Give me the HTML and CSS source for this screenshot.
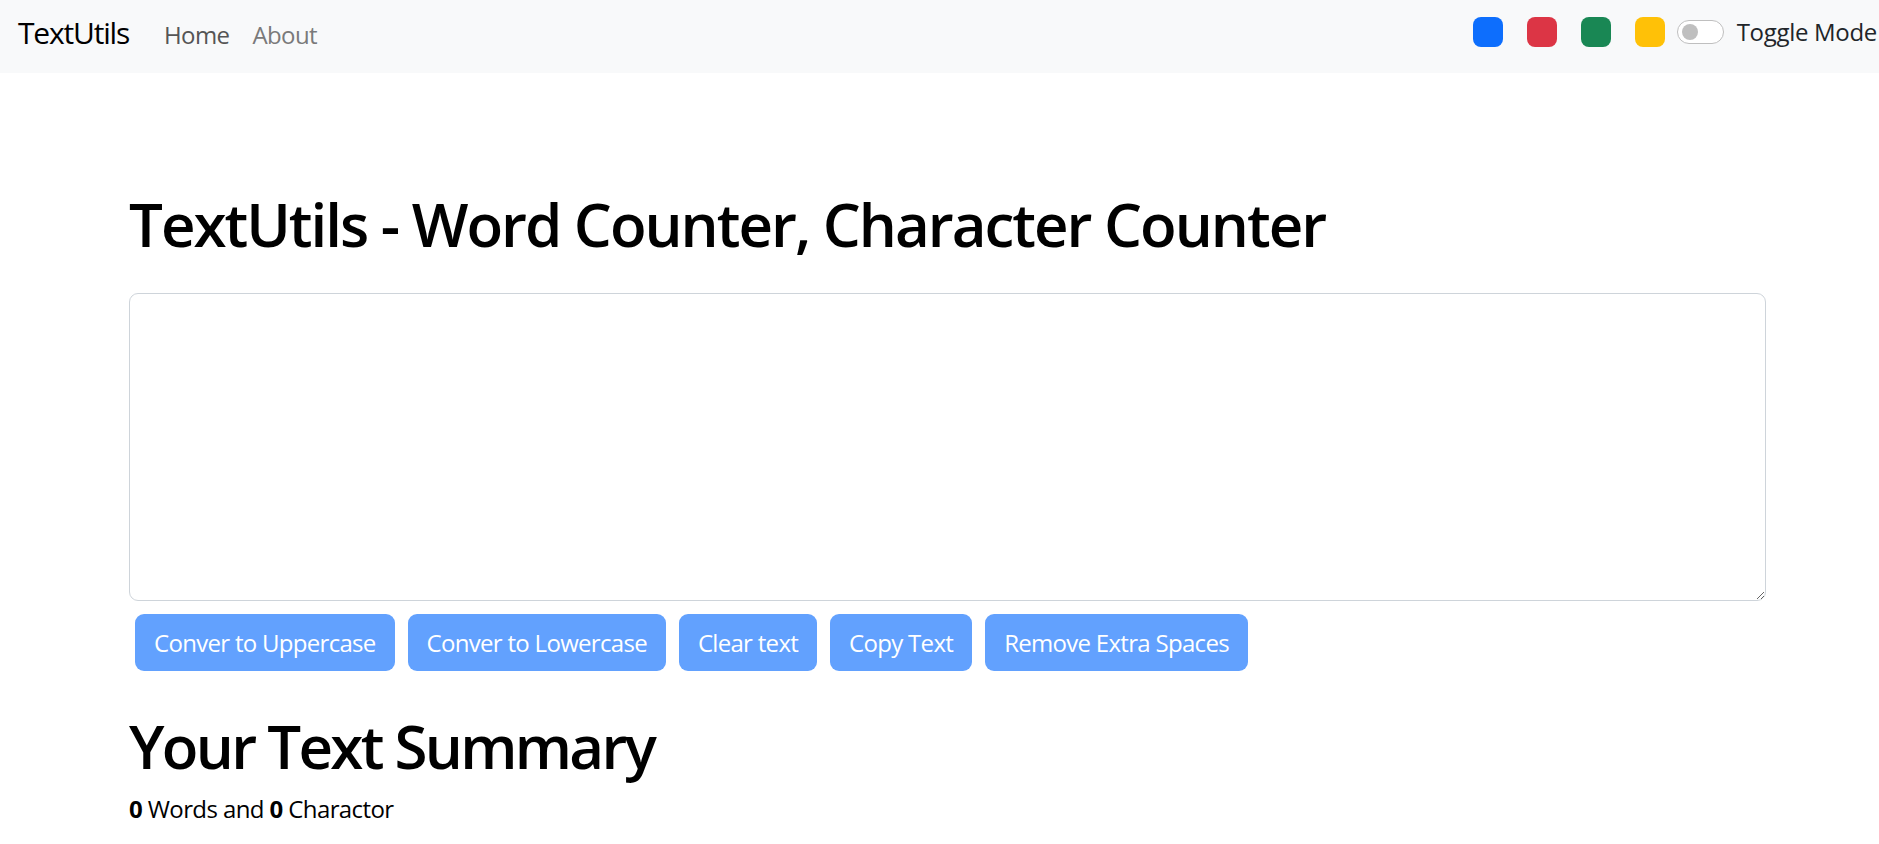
FILE: index.html
```html
<!DOCTYPE html>
<html lang="en">
<head>
<meta charset="utf-8">
<title>TextUtils</title>
<link rel="stylesheet" href="styles.css">
</head>
<body>
<nav class="navbar">
  <div class="nav-left">
    <a class="brand" href="#">TextUtils</a>
    <ul class="nav-links">
      <li><a class="nav-link active" href="#">Home</a></li>
      <li><a class="nav-link" href="#">About</a></li>
    </ul>
  </div>
  <div class="nav-right">
    <div class="swatches">
      <span class="swatch blue"></span>
      <span class="swatch red"></span>
      <span class="swatch green"></span>
      <span class="swatch yellow"></span>
    </div>
    <label class="toggle">
      <span class="switch"><span class="knob"></span></span>
      <span class="toggle-label">Toggle Mode</span>
    </label>
  </div>
</nav>
<main class="container">
  <h1 class="title">TextUtils - Word Counter, Character Counter</h1>
  <textarea class="text-box" rows="8"></textarea>
  <div class="actions">
    <button class="btn" disabled>Conver to Uppercase</button>
    <button class="btn" disabled>Conver to Lowercase</button>
    <button class="btn" disabled>Clear text</button>
    <button class="btn" disabled>Copy Text</button>
    <button class="btn" disabled>Remove Extra Spaces</button>
  </div>
  <h2 class="summary-title">Your Text Summary</h2>
  <p class="summary"><b>0</b> Words and <b>0</b> Charactor</p>
</main>
</body>
</html>
```
FILE: styles.css
```css
* { box-sizing: border-box; }
html, body { margin: 0; padding: 0; }
body {
  font-family: "Open Sans", "Noto Sans", sans-serif;
  color: #000;
  background: #fff;
  overflow: hidden;
  letter-spacing: -0.6px;
}
.navbar {
  height: 73px;
  background: #f8f9fa;
  display: flex;
  align-items: center;
  padding-left: 18px;
  padding-right: 2px;
  padding-bottom: 9px;
}
.nav-left {
  display: flex;
  align-items: baseline;
  flex: 1;
}
.brand {
  font-size: 30px;
  line-height: 45px;
  letter-spacing: -1.2px;
  color: #000;
  text-decoration: none;
  margin-right: 35px;
}
.nav-links {
  list-style: none;
  display: flex;
  gap: 23px;
  margin: 0;
  padding: 0;
}
.nav-link {
  font-size: 24px;
  line-height: 36px;
  text-decoration: none;
  color: #7a7a7a;
}
.nav-link.active { color: #555; }
.nav-right {
  display: flex;
  align-items: center;
  flex-shrink: 0;
}
.swatches {
  display: flex;
  gap: 24px;
  margin-right: 12px;
}
.swatch {
  width: 30px;
  height: 30px;
  border-radius: 8px;
  display: block;
}
.swatch.blue { background: #0d6efd; }
.swatch.red { background: #dc3545; }
.swatch.green { background: #198754; }
.swatch.yellow { background: #ffc107; }
.toggle {
  display: flex;
  align-items: center;
  white-space: nowrap;
}
.switch {
  width: 47px;
  height: 24px;
  border: 1px solid #bfbfbf;
  border-radius: 12px;
  background: #fff;
  display: flex;
  align-items: center;
  padding-left: 4px;
  margin-right: 13px;
}
.knob {
  width: 16px;
  height: 16px;
  border-radius: 50%;
  background: #bfbfbf;
}
.toggle-label {
  font-size: 24px;
  line-height: 36px;
  color: #212529;
  letter-spacing: -0.3px;
}
.container {
  margin-left: 129px;
  width: 1637px;
  padding-top: 115px;
}
.title {
  font-size: 60px;
  font-weight: 600;
  line-height: 1.2;
  letter-spacing: -2px;
  margin: 0 0 33px;
}
.text-box {
  display: block;
  width: 1637px;
  height: 308px;
  border: 1px solid #ced4da;
  border-radius: 9px;
  font-size: 24px;
  resize: vertical;
  outline: none;
}
.actions {
  display: flex;
  gap: 13px;
  padding-left: 6px;
  margin-top: 13px;
}
.btn {
  font-family: inherit;
  font-size: 24px;
  line-height: 37px;
  letter-spacing: -0.7px;
  padding: 9px 18px;
  border: 1px solid transparent;
  border-radius: 9px;
  background: #62a1fe;
  color: #fff;
}
.summary-title {
  font-size: 60px;
  font-weight: 600;
  line-height: 1.2;
  letter-spacing: -2.7px;
  margin: 39px 0 0;
}
.summary {
  font-size: 24px;
  line-height: 36px;
  margin: 9px 0 0;
}
.summary b { font-weight: 700; }
```
